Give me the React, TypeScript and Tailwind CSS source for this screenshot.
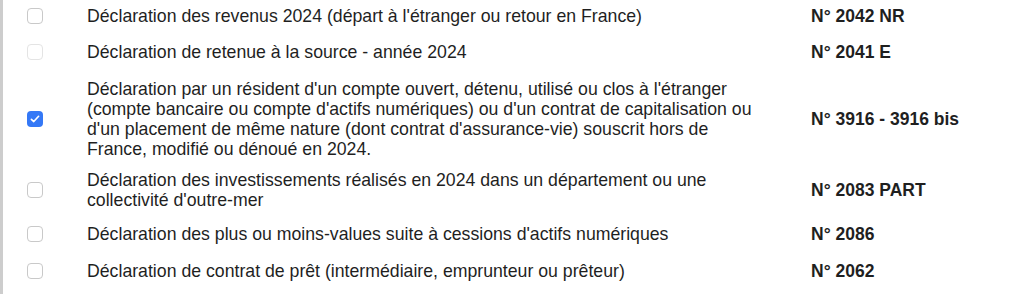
import React from 'react';

type Row = {
  label: string;
  code: string;
  checked?: boolean;
  faded?: boolean;
  gap: string;
};

const rows: Row[] = [
  {
    label: "Déclaration des revenus 2024 (départ à l'étranger ou retour en France)",
    code: 'N° 2042 NR',
    gap: 'mt-0',
  },
  {
    label: 'Déclaration de retenue à la source - année 2024',
    code: 'N° 2041 E',
    faded: true,
    gap: 'mt-4',
  },
  {
    label:
      "Déclaration par un résident d'un compte ouvert, détenu, utilisé ou clos à l'étranger (compte bancaire ou compte d'actifs numériques) ou d'un contrat de capitalisation ou d'un placement de même nature (dont contrat d'assurance-vie) souscrit hors de France, modifié ou dénoué en 2024.",
    code: 'N° 3916 - 3916 bis',
    checked: true,
    gap: 'mt-[17px]',
  },
  {
    label:
      "Déclaration des investissements réalisés en 2024 dans un département ou une collectivité d'outre-mer",
    code: 'N° 2083 PART',
    gap: 'mt-[11px]',
  },
  {
    label: "Déclaration des plus ou moins-values suite à cessions d'actifs numériques",
    code: 'N° 2086',
    gap: 'mt-[14px]',
  },
  {
    label: 'Déclaration de contrat de prêt (intermédiaire, emprunteur ou prêteur)',
    code: 'N° 2062',
    gap: 'mt-[17px]',
  },
];

// Case à cocher façon macOS
const Checkbox: React.FC<{ checked?: boolean; faded?: boolean }> = ({ checked, faded }) => {
  if (checked) {
    return (
      <span className="flex h-4 w-4 items-center justify-center rounded-[4px] bg-[#3478f6]">
        <svg viewBox="0 0 16 16" className="h-[12px] w-[12px]">
          <path d="M3.2 8.4 6.4 11.4 12.8 4.4" fill="none" stroke="white" strokeWidth="2.2" strokeLinecap="round" strokeLinejoin="round" />
        </svg>
      </span>
    );
  }
  return (
    <span
      className={`block h-[16px] w-[16px] rounded-[4px] border bg-white ${
        faded ? 'border-[#e4e4e4]' : 'border-[#c9c9c9]'
      }`}
    />
  );
};

export default function App() {
  return (
    <div
      className="h-[294px] w-[1024px] border-l-[3px] border-[#cdcdcd] bg-white pt-[6px] text-[17.7px] leading-5 text-[#1f1f1f]"
      style={{ fontFamily: '"Liberation Sans", Arial, sans-serif' }}
    >
      {rows.map((row) => (
        <div key={row.code} className={`flex items-center ${row.gap}`}>
          <div className="flex w-[84px] justify-start pl-[24px]">
            <Checkbox checked={row.checked} faded={row.faded} />
          </div>
          <div className="w-[668px]">{row.label}</div>
          <div className="ml-[56px] text-[17.5px] font-bold">{row.code}</div>
        </div>
      ))}
    </div>
  );
}
